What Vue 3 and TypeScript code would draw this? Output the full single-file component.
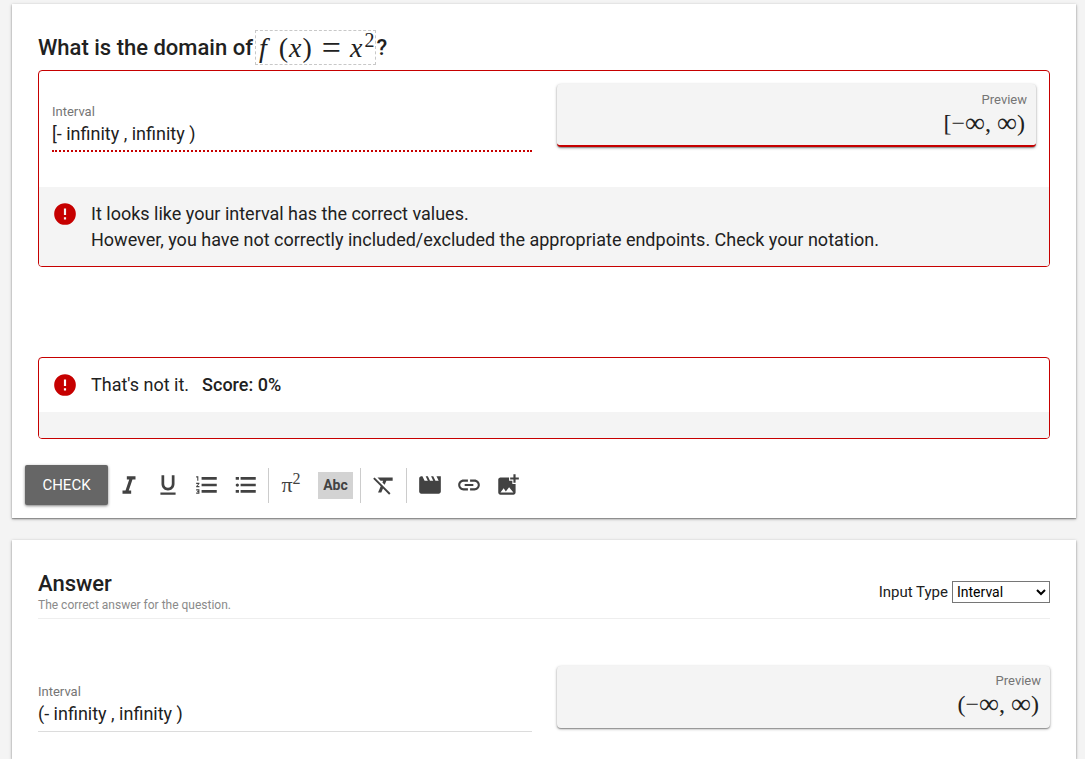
<script setup lang="ts">
import { ref } from 'vue'

interface Tool {
  name: string
  path: string
}

const response = ref('[- infinity , infinity )')
const answer = ref('(- infinity , infinity )')
const inputType = ref('Interval')
const inputTypes: string[] = ['Interval', 'Number', 'Expression']

const alertPath = 'M13 13h-2V7h2m0 10h-2v-2h2M12 2a10 10 0 1 0 0 20 10 10 0 0 0 0-20z'

const textTools: Tool[] = [
  { name: 'Italic', path: 'M10 4v3h2.21l-3.42 10H6v3h8v-3h-2.21l3.42-10H18V4z' },
  { name: 'Underline', path: 'M12 17c3.31 0 6-2.69 6-6V3h-2.5v8c0 1.93-1.57 3.5-3.5 3.5S8.5 12.93 8.5 11V3H6v8c0 3.31 2.69 6 6 6zm-7 2v2h14v-2H5z' },
  { name: 'Numbered list', path: 'M2 17h2v.5H3v1h1v.5H2v1h3v-4H2v1zm1-9h1V4H2v1h1v3zm-1 3h1.8L2 13.1v.9h3v-1H3.2L5 10.9V10H2v1zm5-6.5v2.7h14V4.5H7zm0 14.7h14v-2.7H7v2.7zm0-6.1h14v-2.3H7v2.3z' },
  { name: 'Bulleted list', path: 'M4 10.5c-.83 0-1.5.67-1.5 1.5s.67 1.5 1.5 1.5 1.5-.67 1.5-1.5-.67-1.5-1.5-1.5zM2.5 4.5h3v2.7h-3zM2.5 16.5h3v2.7h-3zM7 19.2h14v-2.7H7v2.7zm0-6.1h14v-2.3H7v2.3zm0-8.6v2.7h14V4.5H7z' }
]

const clearTool: Tool = {
  name: 'Clear formatting',
  path: 'M3.27 5L2 6.27l6.97 6.97L6.5 19h3l1.57-3.66L16.73 21 18 19.73 3.55 5.27 3.27 5zM6 5v.18L8.82 8h2.4l-.72 1.68 2.1 2.1L14.21 8H20V5H6z'
}

const mediaTools: Tool[] = [
  { name: 'Insert video', path: 'M18 4l2 4h-3l-2-4h-2l2 4h-3l-2-4H8l2 4H7L5 4H4c-1.1 0-1.99.9-1.99 2L2 18c0 1.1.9 2 2 2h16c1.1 0 2-.9 2-2V4h-4z' },
  { name: 'Insert link', path: 'M3.9 12c0-1.71 1.39-3.1 3.1-3.1h4V7H7c-2.76 0-5 2.24-5 5s2.24 5 5 5h4v-1.9H7c-1.71 0-3.1-1.39-3.1-3.1zM8 13h8v-2H8v2zm9-6h-4v1.9h4c1.71 0 3.1 1.39 3.1 3.1s-1.39 3.1-3.1 3.1h-4V17h4c2.76 0 5-2.24 5-5s-2.24-5-5-5z' },
  { name: 'Insert image', path: 'M19 7v3h-2V7h-3V5h3V2h2v3h3v2h-3zm-3 4V8h-3V5H5c-1.1 0-2 .9-2 2v12c0 1.1.9 2 2 2h12c1.1 0 2-.9 2-2v-8h-3zM5 19l3-4 2 3 3-4 4 5H5z' }
]
</script>

<template>
  <main class="page">
    <section class="card question">
      <h1 class="title">
        <span>What is the domain of</span>
        <span class="formula"><i class="fn">f</i><span class="paren">(</span><i>x</i><span class="paren">)</span><span class="equals">=</span><i>x</i><sup>2</sup></span>
        <span>?</span>
      </h1>

      <div class="panel">
        <div class="entry entry-inset">
          <div class="field">
            <label for="response">Interval</label>
            <input id="response" v-model="response" class="wrong" type="text" />
          </div>
          <div class="preview preview-wrong">
            <span class="preview-label">Preview</span>
            <span class="preview-math"><span>[</span>−<span class="inf">∞</span>,<span class="inf second">∞</span><span>)</span></span>
          </div>
        </div>
        <div class="notice shaded">
          <svg class="icon alert" viewBox="0 0 24 24" aria-hidden="true"><path fill-rule="evenodd" :d="alertPath" /></svg>
          <p>
            It looks like your interval has the correct values.<br />
            However, you have not correctly included/excluded the appropriate endpoints. Check your notation.
          </p>
        </div>
      </div>

      <div class="panel result">
        <div class="notice">
          <svg class="icon alert" viewBox="0 0 24 24" aria-hidden="true"><path fill-rule="evenodd" :d="alertPath" /></svg>
          <p>That's not it.<strong>Score: 0%</strong></p>
        </div>
        <div class="strip"></div>
      </div>

      <div class="toolbar">
        <button class="check" type="button">CHECK</button>
        <div class="tools">
          <button v-for="tool in textTools" :key="tool.name" class="tool" type="button" :aria-label="tool.name">
            <svg class="icon" viewBox="0 0 24 24" aria-hidden="true"><path :d="tool.path" /></svg>
          </button>
        </div>
        <span class="divider"></span>
        <div class="tools formula-tools">
          <button class="tool pi" type="button" aria-label="Insert formula">π<sup>2</sup></button>
          <button class="tool abc" type="button">Abc</button>
        </div>
        <span class="divider"></span>
        <div class="tools">
          <button class="tool" type="button" :aria-label="clearTool.name">
            <svg class="icon" viewBox="0 0 24 24" aria-hidden="true"><path :d="clearTool.path" /></svg>
          </button>
        </div>
        <span class="divider"></span>
        <div class="tools">
          <button v-for="tool in mediaTools" :key="tool.name" class="tool" type="button" :aria-label="tool.name">
            <svg class="icon" viewBox="0 0 24 24" aria-hidden="true"><path fill-rule="evenodd" :d="tool.path" /></svg>
          </button>
        </div>
      </div>
    </section>

    <section class="card answer">
      <header class="answer-head">
        <div>
          <h2>Answer</h2>
          <p class="hint">The correct answer for the question.</p>
        </div>
        <div class="type">
          <label for="input-type">Input Type</label>
          <select id="input-type" v-model="inputType">
            <option v-for="option in inputTypes" :key="option">{{ option }}</option>
          </select>
        </div>
      </header>
      <div class="entry">
        <div class="field">
          <label for="answer">Interval</label>
          <input id="answer" v-model="answer" type="text" />
        </div>
        <div class="preview">
          <span class="preview-label">Preview</span>
          <span class="preview-math"><span>(</span>−<span class="inf">∞</span>,<span class="inf second">∞</span><span>)</span></span>
        </div>
      </div>
    </section>
  </main>
</template>

<style>
body {
  margin: 0;
  background: #f4f4f4;
}
</style>

<style scoped>
* {
  box-sizing: border-box;
}

.page {
  display: flex;
  flex-direction: column;
  gap: 22px;
  min-height: 100vh;
  padding: 4px 9px 0 12px;
  color: #212121;
  font-family: Roboto, "Liberation Sans", sans-serif;
}

h1,
h2,
p {
  margin: 0;
}

button,
input,
select {
  font-family: inherit;
}

.card {
  background: #fff;
  box-shadow: 0 1px 3px rgba(0, 0, 0, 0.35), 0 1px 1px rgba(0, 0, 0, 0.25);
}

.question {
  padding: 26px 26px 13px;
}

.answer {
  flex: 1;
  padding: 31px 26px 27px;
}

.title {
  display: flex;
  align-items: center;
  height: 40px;
  padding-bottom: 5px;
  font-size: 22px;
  font-weight: 500;
  line-height: 35px;
}

.formula {
  display: inline-flex;
  align-items: center;
  height: 35px;
  margin-left: 2px;
  padding: 0 1px;
  border: 1px dashed #c8c8c8;
  font-family: "Liberation Serif", serif;
  font-size: 28px;
  font-weight: 400;
}

.formula .fn {
  padding: 0 11px 0 2px;
}

.formula .paren {
  padding: 0 1px;
}

.formula .equals {
  padding: 0 9px;
  font-size: 34px;
}

.formula sup {
  align-self: flex-start;
  padding-left: 2px;
  font-size: 20px;
  line-height: 18px;
}

.panel {
  overflow: hidden;
  border: 1px solid #c60000;
  border-radius: 4px;
}

.result {
  margin-top: 90px;
}

.entry {
  display: grid;
  grid-template-columns: 1fr 1fr;
  gap: 25px;
  align-items: start;
}

.entry-inset {
  padding: 13px 13px 35px;
}

.field {
  display: flex;
  flex-direction: column;
  padding-top: 16px;
}

.entry-inset .field {
  padding-top: 18px;
}

.field label {
  color: #757575;
  font-size: 13px;
  line-height: 20px;
}

.field input {
  width: 100%;
  height: 30px;
  padding: 0 0 6px;
  border: 0;
  border-bottom: 1px solid #dcdcdc;
  border-radius: 0;
  outline: 0;
  background: transparent;
  color: #212121;
  font-size: 18px;
}

.field input.wrong {
  border-bottom: 2px dotted #c60000;
}

.preview {
  display: flex;
  flex-direction: column;
  align-items: flex-end;
  height: 62px;
  padding: 5px 9px;
  border-radius: 4px;
  background: #f4f4f4;
  box-shadow: 0 1px 3px rgba(0, 0, 0, 0.35), 0 1px 1px rgba(0, 0, 0, 0.25);
}

.preview-wrong {
  height: 63px;
  padding-top: 6px;
  border-bottom: 2px solid #c60000;
}

.preview-label {
  color: #757575;
  font-size: 13px;
  line-height: 20px;
}

.preview-math {
  display: flex;
  align-items: center;
  height: 26px;
  padding-right: 2px;
  font-family: "Liberation Serif", serif;
  font-size: 24px;
  line-height: 26px;
}

.preview-math .inf {
  font-size: 28px;
}

.preview-math .second {
  padding-left: 6px;
}

.notice {
  display: flex;
  gap: 13px;
  padding: 14px 13px;
  font-size: 18px;
  line-height: 26px;
}

.notice.shaded {
  padding-bottom: 13px;
}

.shaded,
.strip {
  background: #f4f4f4;
}

.strip {
  height: 26px;
}

.notice strong {
  margin-left: 13px;
  font-weight: 500;
}

.icon {
  display: block;
  flex: none;
  width: 26px;
  height: 26px;
  fill: currentColor;
}

.alert {
  color: #c60000;
}

.toolbar {
  display: flex;
  align-items: center;
  margin: 26px 0 0 -13px;
}

.check {
  min-width: 83px;
  height: 40px;
  margin-right: 3px;
  padding: 0 16px;
  border: 0;
  border-radius: 2px;
  background: #666;
  box-shadow: 0 1px 3px rgba(0, 0, 0, 0.5);
  color: #fff;
  font-size: 15px;
}

.tools {
  display: flex;
  align-items: center;
  gap: 4px;
}

.formula-tools {
  margin-right: 2px;
}

.tool {
  display: flex;
  align-items: center;
  justify-content: center;
  width: 35px;
  height: 27px;
  padding: 0;
  border: 0;
  background: transparent;
  color: #424242;
}

.pi {
  width: 40px;
  padding-right: 6px;
  font-family: "Liberation Serif", serif;
  font-size: 22px;
}

.pi sup {
  align-self: flex-start;
  font-size: 16px;
  line-height: 14px;
}

.abc {
  background: #d3d3d3;
  font-size: 14px;
  font-weight: 700;
}

.divider {
  width: 1px;
  height: 35px;
  margin: 0 5px;
  background: #ccc;
}

.answer-head {
  display: flex;
  align-items: center;
  justify-content: space-between;
  margin-bottom: 47px;
  padding-bottom: 5px;
  border-bottom: 1px solid #eee;
}

h2 {
  font-size: 22px;
  font-weight: 500;
  line-height: 26px;
}

.hint {
  color: #8a8a8a;
  font-size: 12px;
  line-height: 16px;
}

.type {
  display: flex;
  align-items: center;
  gap: 4px;
  font-size: 15px;
}

.type select {
  width: 98px;
  height: 22px;
  padding: 0;
  border: 1px solid #767676;
  border-radius: 0;
  background-color: #fff;
  color: #000;
  font-size: 14px;
}
</style>
